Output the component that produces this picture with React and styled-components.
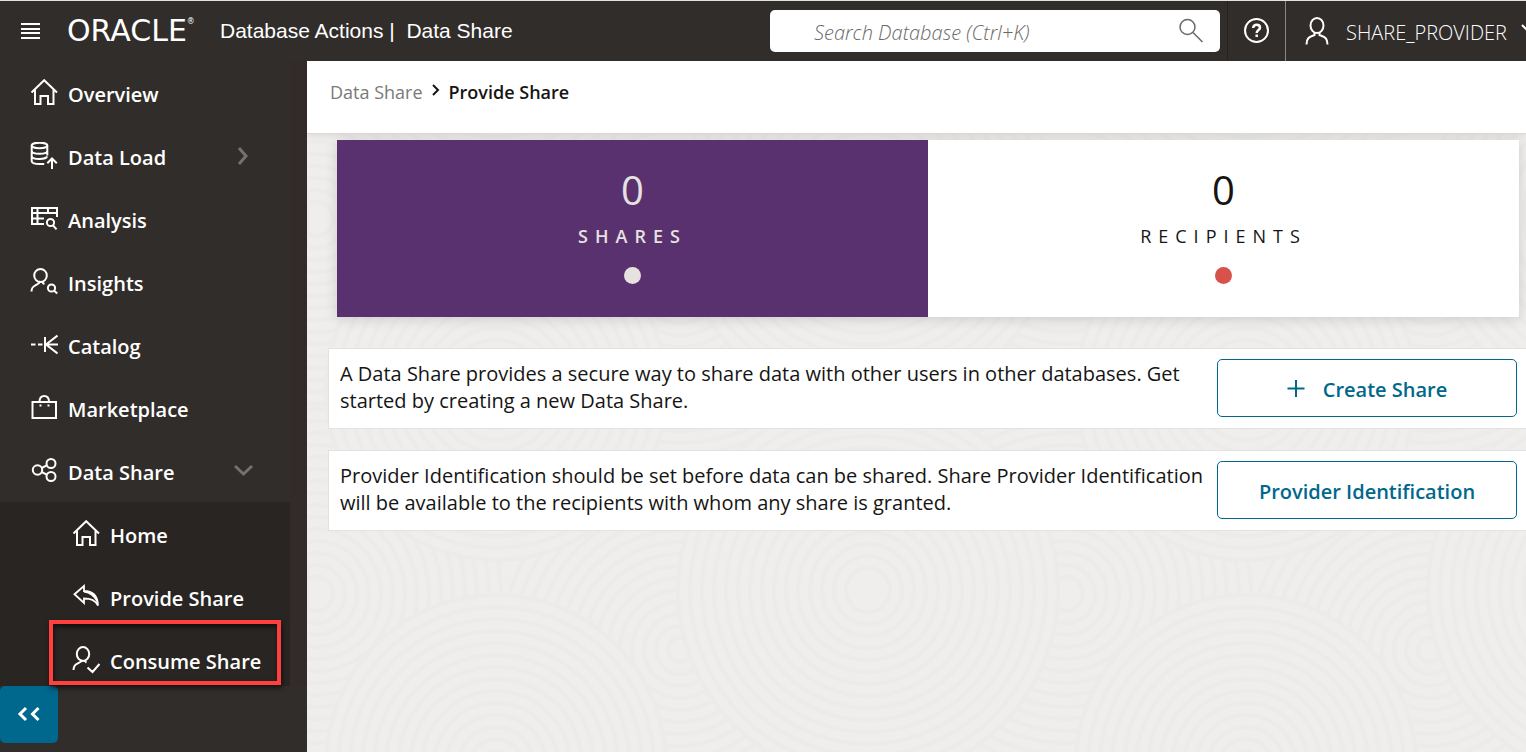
import React from 'react';
import styled, { createGlobalStyle, css } from 'styled-components';

const uiFont = '"Open Sans", "Noto Sans", sans-serif';

const GlobalStyle = createGlobalStyle`
  *, *::before, *::after { box-sizing: border-box; }
  body { margin: 0; font-family: ${uiFont}; font-size: 20px; color: #161513; background: #312d2a; }
  button, input { font: inherit; }
  h1, p, ul { margin: 0; padding: 0; }
`;

const Page = styled.div`
  display: flex;
  flex-direction: column;
  height: 100vh;
  overflow: hidden;
`;

const Header = styled.header`
  display: flex;
  align-items: center;
  flex: none;
  height: 61px;
  border-top: 1px solid #dfe4dc;
  background: #312d2a;
  color: #fff;
`;

const IconButton = styled.button`
  display: flex;
  align-items: center;
  justify-content: center;
  padding: 0;
  border: 0;
  background: none;
  color: inherit;
  cursor: pointer;
`;

const MenuButton = styled(IconButton)`
  width: 20px;
  height: 20px;
  margin: 0 27px 0 20px;
`;

const Brand = styled.div`
  display: flex;
  align-items: center;
  flex: 1;
  font-family: "Liberation Sans", sans-serif;
  font-size: 21px;
  white-space: pre;
`;

const Logo = styled.span`
  display: flex;
  width: 153px;
  font-family: "DejaVu Sans", sans-serif;
  font-size: 30px;
  line-height: 30px;

  sup { font-size: 8px; line-height: 12px; }
`;

const Product = styled.h1`
  font-size: inherit;
  font-weight: 400;
`;

const Search = styled.label`
  display: flex;
  align-items: center;
  width: 450px;
  height: 42px;
  padding: 0 16px 0 44px;
  border-radius: 5px;
  background: #fff;
  color: #6b6966;
`;

const SearchInput = styled.input`
  flex: 1;
  min-width: 0;
  padding: 2px 0 0;
  border: 0;
  outline: 0;
  background: none;
  font-style: italic;
  font-weight: 300;
  font-size: 20px;

  &::placeholder { color: #6b6966; opacity: 1; }
`;

const HelpButton = styled(IconButton)`
  width: 59px;
  height: 60px;
  margin-left: 7px;
  border-left: 1px solid #25211f;
  border-right: 1px solid #8b8785;
`;

const UserArea = styled.div`
  width: 240px;
  overflow: hidden;
`;

const UserButton = styled(IconButton)`
  justify-content: flex-start;
  gap: 14px;
  width: 100%;
  height: 60px;
  padding-left: 18px;
  font-weight: 300;

  svg { flex: none; }
  span { padding-top: 2px; }
`;

const Body = styled.div`
  display: flex;
  flex: 1;
  min-height: 0;
`;

const Sidebar = styled.aside`
  display: flex;
  flex-direction: column;
  flex: none;
  width: 307px;
  background: #312d2a;
`;

const Nav = styled.nav`
  flex: 1;
  min-height: 0;
  overflow: hidden;
  border-right: 17px solid #322b29;
`;

const List = styled.ul`
  list-style: none;
  ${(p) => p.$nested && css`background: #292522;`}
`;

const NavLink = styled.a`
  position: relative;
  display: flex;
  align-items: center;
  height: 63px;
  padding: 0 ${(p) => (p.$nested ? 8 : 36)}px 0 ${(p) => (p.$nested ? 72 : 30)}px;
  color: #fff;
  font-weight: 600;
  text-decoration: none;
  white-space: nowrap;

  span { flex: 1; padding: 5px 0 0 10px; line-height: 28px; }
  svg { flex: none; }
`;

const Highlight = styled.div`
  position: absolute;
  left: 49px;
  top: 620px;
  width: 232px;
  height: 65px;
  border: 4px solid #ff403f;
  box-shadow: 1px 3px 5px rgba(0, 0, 0, 0.6), inset 1px 3px 5px rgba(0, 0, 0, 0.6);
  pointer-events: none;
`;

const SidebarFoot = styled.div`
  height: 66px;
`;

const Collapse = styled(IconButton)`
  width: 58px;
  height: 57px;
  padding: 0 2px 2px 0;
  border-radius: 5px;
  background: #00688c;
  color: #fff;
`;

const Main = styled.main`
  position: relative;
  display: flex;
  flex-direction: column;
  flex: 1;
  min-width: 0;
  overflow: hidden;
  background: #efeeec;
`;

const Texture = styled.svg`
  position: absolute;
  inset: 0;
  width: 100%;
  height: 100%;
`;

const Breadcrumb = styled.nav`
  position: relative;
  display: flex;
  align-items: flex-start;
  height: 73px;
  padding: 18px 23px 0;
  border-bottom: 1px solid #dddbd9;
  background: #fff;
  box-shadow: 0 2px 6px rgba(0, 0, 0, 0.08);
  font-size: 18px;
  line-height: 26px;

  a { color: #7b7977; text-decoration: none; }
  svg { margin: 5px 7px 0; }
  strong { font-weight: 600; }
`;

const Content = styled.div`
  position: relative;
  padding: 6px 0 0 21px;
`;

const Tiles = styled.div`
  display: grid;
  grid-template-columns: 1fr 1fr;
  margin: 0 7px 31px 9px;
  box-shadow: 0 2px 12px rgba(0, 0, 0, 0.14);
`;

const Tile = styled.button`
  display: flex;
  flex-direction: column;
  align-items: center;
  height: 177px;
  padding: 23px 0 0;
  border: 0;
  background: ${(p) => (p.$active ? '#5a316f' : '#fff')};
  color: ${(p) => (p.$active ? '#e5e2df' : '#161513')};
`;

const Count = styled.span`
  font-size: 40px;
  line-height: 54px;
`;

const TileLabel = styled.span`
  font-size: 18px;
  line-height: 24px;
  margin-top: 7px;
  letter-spacing: 7px;
  font-weight: ${(p) => (p.$active ? 600 : 400)};
`;

const Dot = styled.span`
  width: 17px;
  height: 17px;
  margin-top: 19px;
  border-radius: 50%;
  background: ${(p) => (p.$active ? '#e5e2df' : '#d7524b')};
`;

const Card = styled.section`
  display: flex;
  align-items: flex-start;
  justify-content: space-between;
  gap: 12px;
  height: 81px;
  margin-bottom: 21px;
  padding: 10px 9px 10px 11px;
  border: 1px solid #e3e2e1;
  border-right: 0;
  background: #fff;

  p { padding-top: 1px; line-height: 27px; white-space: nowrap; }
`;

const ActionButton = styled.button`
  display: flex;
  align-items: center;
  justify-content: center;
  gap: 16px;
  flex: none;
  width: 300px;
  height: 58px;
  padding: 2px 0 0;
  border: 1px solid #00688c;
  border-radius: 5px;
  background: #fff;
  color: #00688c;
  font-weight: 600;
`;

function Icon({ size = 28, width = 2, children, ...rest }) {
  return (
    <svg width={size} height={size} viewBox={`0 0 ${size} ${size}`} fill="none" stroke="currentColor" strokeWidth={width} aria-hidden="true" {...rest}>
      {children}
    </svg>
  );
}

const icons = {
  home: <path d="M1.5 13.5 14.2 1.2 27 13.5M5 11v14h5.500v-8h7.500v8h5.500V11" />,
  load: (
    <>
      <ellipse cx="9.500" cy="3.500" rx="7.800" ry="2.800" />
      <path d="M1.700 3.500v15.500c0 2.200 4 3 8 3h4.500M17.300 3.500v10M1.700 8.700c0 2 3.500 3 7.800 3s7.800-1 7.800-3M1.700 13.900c0 2 3.500 3 7.800 3s7-.8 7.600-2.500M22 27V17M17.300 21.300 22 16.500l4.800 4.800" />
    </>
  ),
  analysis: (
    <>
      <path d="M14 19H2V3h25v9M2 8h25M2 13.500h12M7.500 3v16M18 3v6" />
      <circle cx="20.500" cy="17.500" r="3.600" />
      <path d="m23 20.300 3.500 4" />
    </>
  ),
  insights: (
    <>
      <ellipse cx="10.500" cy="7.500" rx="6.300" ry="6.500" />
      <path d="M1.500 23.500c0-6 4-5.500 7.500-8.500l1.500-1.800M12 13c.5 2 1.300 2.500 2.500 3" />
      <circle cx="21.500" cy="20" r="3.600" />
      <path d="m24 22.500 3.200 3" />
    </>
  ),
  catalog: <path d="M1 13.500h4.500M8 13.500h4.500M15 6v15M28 13.500H16M27.500 4.500 16 13.500l11.500 9" />,
  market: (
    <>
      <path d="M2.500 8h23.500v16H2.500zM9.500 8c0-4 1.500-6 4.700-6s4.800 2 4.800 6" />
      <path d="M9.500 11.500h2M17.500 11.500h2" />
    </>
  ),
  share: (
    <>
      <circle cx="7.500" cy="13" r="4.700" />
      <circle cx="21" cy="6.500" r="4.500" />
      <circle cx="21" cy="19.500" r="4.500" />
      <path d="m11.700 11 5-2.600M11.700 15l5 2.600" />
    </>
  ),
  provide: <path d="M2.500 11.200 12 3v5c8 0 13.500 4.500 14 14.500-3-5.500-7-7-14-7v4.500z M12 8.500c6 1 10.500 4 13 9.500" strokeWidth="1.800" />,
  consume: (
    <>
      <ellipse cx="11" cy="8" rx="6.200" ry="7" />
      <path d="M1.500 24c0-6 4-6 7.500-8.500l1.500-1.500M12.500 14c.5 1.500 1 2 2 2.500M15.500 21.500l5 4.500 7-8" />
    </>
  ),
};

const items = [
  { label: 'Overview', icon: 'home' },
  { label: 'Data Load', icon: 'load', chevron: 'right' },
  { label: 'Analysis', icon: 'analysis' },
  { label: 'Insights', icon: 'insights' },
  { label: 'Catalog', icon: 'catalog' },
  { label: 'Marketplace', icon: 'market' },
  { label: 'Data Share', icon: 'share', chevron: 'down' },
];

const subItems = [
  { label: 'Home', icon: 'home' },
  { label: 'Provide Share', icon: 'provide' },
  { label: 'Consume Share', icon: 'consume' },
];

function NavItem({ item, nested }) {
  return (
    <li>
      <NavLink href="#" $nested={nested}>
        <Icon>{icons[item.icon]}</Icon>
        <span>{item.label}</span>
        {item.chevron && (
          <Icon size={20} width={3} color="#75716f">
            <path d={item.chevron === 'right' ? 'M5 2l7 8-7 8' : 'M1 5l8.500 8 8.500-8'} />
          </Icon>
        )}
      </NavLink>
    </li>
  );
}

// Centre and radius of each overlapping ring disc in one texture tile.
const discs = [
  [562, 60, 180], [562, 435, 180],
  [198, 4, 185], [198, 379, 185], [948, 4, 185],
  [0, 0, 190], [750, 0, 190], [0, 375, 190], [750, 375, 190],
  [378, 175, 170],
];

function Rings() {
  return (
    <Texture aria-hidden="true">
      <defs>
        <pattern id="rings" x="-189" y="529" width="750" height="375" patternUnits="userSpaceOnUse">
          <rect width="750" height="375" fill="#efeeec" />
          {discs.map(([x, y, r], i) => (
            <g key={i} fill="#efeeec" stroke="#ecebe9" strokeWidth="4">
              {Array.from({ length: Math.floor(r / 12) }, (_, n) => (
                <circle key={n} cx={x} cy={y} r={r - n * 12} />
              ))}
            </g>
          ))}
        </pattern>
      </defs>
      <rect width="100%" height="100%" fill="url(#rings)" />
    </Texture>
  );
}

function StatTile({ label, active }) {
  return (
    <Tile type="button" $active={active}>
      <Count>0</Count>
      <TileLabel $active={active}>{label}</TileLabel>
      <Dot $active={active} />
    </Tile>
  );
}

export default function App() {
  return (
    <Page>
      <GlobalStyle />
      <Header>
        <MenuButton type="button" aria-label="Navigation menu">
          <Icon size={20}><path d="M1 3h19M1 8h19M1 12h19M1 17h19" /></Icon>
        </MenuButton>
        <Brand>
          <Logo>ORACLE<sup>®</sup></Logo>
          <Product>{'Database Actions |  Data Share'}</Product>
        </Brand>
        <Search>
          <SearchInput type="text" aria-label="Search Database" placeholder="Search Database (Ctrl+K)" />
          <Icon size={26} width={1.5}><circle cx="9.500" cy="9" r="7.500" /><path d="m15 14.500 9.500 9.500" /></Icon>
        </Search>
        <HelpButton type="button" aria-label="Help">
          <Icon size={28}>
            <circle cx="13.500" cy="13.500" r="11.500" />
            <path d="M10.200 11c0-4.500 6.800-4 6.800-.3 0 2.300-3.300 2.500-3.300 5.300M13.700 17.500v2.500" strokeWidth="2.500" />
          </Icon>
        </HelpButton>
        <UserArea>
          <UserButton type="button">
            <Icon size={28}>
              <ellipse cx="13" cy="8.500" rx="6.500" ry="7.500" />
              <path d="M2.500 27.500c0-7 3-7.500 8-9.500v-2M23.500 27.500c0-7-3-7.500-8-9.500v-2" />
            </Icon>
            <span>SHARE_PROVIDER</span>
            <Icon size={20}><path d="m1 4 8 8 8-8" /></Icon>
          </UserButton>
        </UserArea>
      </Header>
      <Body>
        <Sidebar>
          <Nav aria-label="Main">
            <List>{items.map((item) => <NavItem key={item.label} item={item} />)}</List>
            <List $nested>{subItems.map((item) => <NavItem key={item.label} item={item} nested />)}</List>
          </Nav>
          <SidebarFoot>
            <Collapse type="button" aria-label="Collapse menu">
              <Icon size={24} width={3}><path d="M10 6 4 12l6 6M22.500 6l-6 6 6 6" /></Icon>
            </Collapse>
          </SidebarFoot>
          <Highlight />
        </Sidebar>
        <Main>
          <Rings />
          <Breadcrumb aria-label="Breadcrumb">
            <a href="#">Data Share</a>
            <Icon size={12}><path d="m3 1 5 5-5 5" /></Icon>
            <strong>Provide Share</strong>
          </Breadcrumb>
          <Content>
            <Tiles>
              <StatTile label="SHARES" active />
              <StatTile label="RECIPIENTS" />
            </Tiles>
            <Card>
              <p>
                A Data Share provides a secure way to share data with other users in other databases. Get<br />
                started by creating a new Data Share.
              </p>
              <ActionButton type="button">
                <Icon size={20}><path d="M9 1v17M.5 9.500h17" /></Icon>
                Create Share
              </ActionButton>
            </Card>
            <Card>
              <p>
                Provider Identification should be set before data can be shared. Share Provider Identification<br />
                will be available to the recipients with whom any share is granted.
              </p>
              <ActionButton type="button">Provider Identification</ActionButton>
            </Card>
          </Content>
        </Main>
      </Body>
    </Page>
  );
}
